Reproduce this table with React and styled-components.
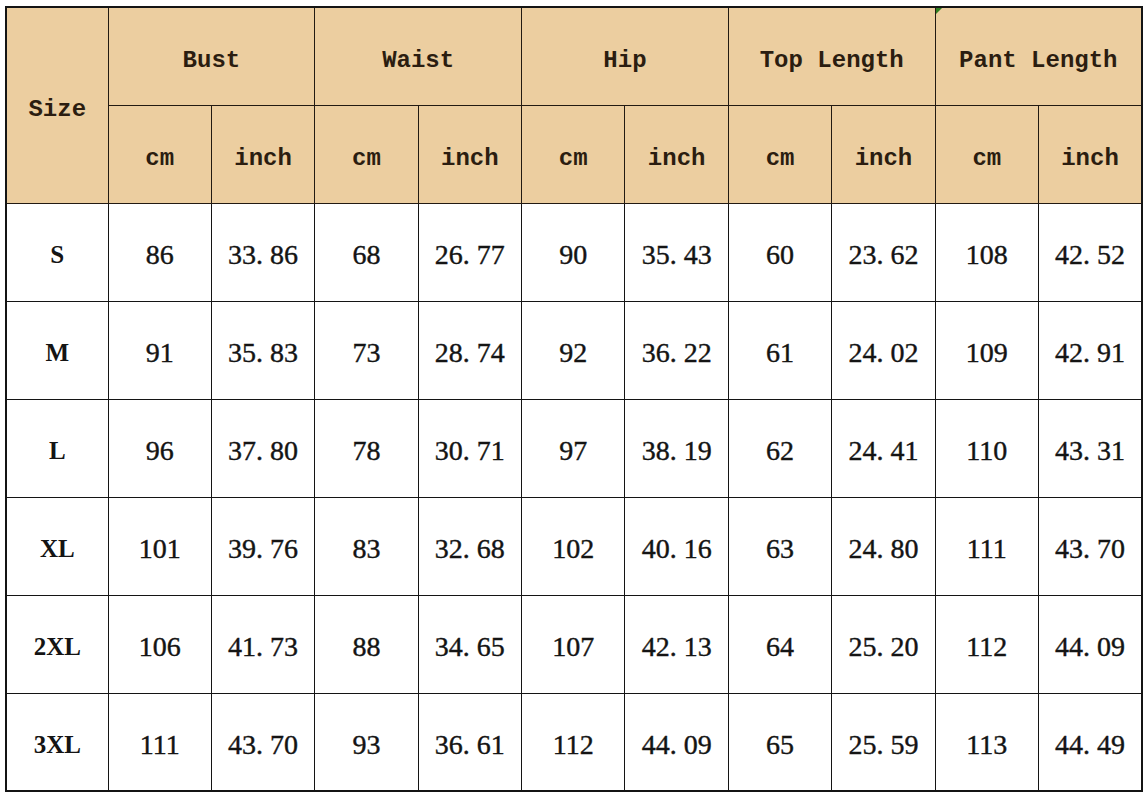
import styled, { createGlobalStyle } from "styled-components";

const GlobalStyle = createGlobalStyle`
  html, body {
    margin: 0;
    padding: 0;
    background: #ffffff;
  }
  body {
    font-family: "Liberation Serif", "Times New Roman", serif;
  }
`;

const Page = styled.div`
  padding: 6px 0 0 5px;
  width: 1148px;
  height: 800px;
  box-sizing: border-box;
`;

const SizeTable = styled.table`
  width: 1138px;
  table-layout: fixed;
  border-collapse: collapse;
  border: 2px solid #141414;
`;

const Row = styled.tr`
  height: 98px;
`;

const HeadCell = styled.th`
  position: relative;
  background: #eccea0;
  border: 1px solid #221a12;
  padding: 9px 0 0;
  text-align: center;
  vertical-align: middle;
  font-family: "Liberation Mono", "DejaVu Sans Mono", monospace;
  font-size: 24px;
  font-weight: 700;
  color: #2b1d10;
  white-space: pre;

  ${({ $marked }) =>
    $marked &&
    `
    &::before {
      content: "";
      position: absolute;
      left: 0;
      top: 0;
      border-top: 6px solid #2e7d1f;
      border-right: 6px solid transparent;
    }
  `}
`;

const DataCell = styled.td`
  border: 1px solid #141414;
  padding: 6px 0 0;
  text-align: center;
  vertical-align: middle;
  font-family: "Liberation Serif", "Times New Roman", serif;
  font-size: ${({ $size }) => ($size ? "25px" : "28px")};
  font-weight: ${({ $size }) => ($size ? 700 : 400)};
  -webkit-text-stroke: ${({ $size }) => ($size ? "0" : "0.4px")};
  color: #141414;
  white-space: pre;
`;

const groups = ["Bust", "Waist", "Hip", "Top Length", "Pant Length"];

const rows = [
  ["S", "86", "33. 86", "68", "26. 77", "90", "35. 43", "60", "23. 62", "108", "42. 52"],
  ["M", "91", "35. 83", "73", "28. 74", "92", "36. 22", "61", "24. 02", "109", "42. 91"],
  ["L", "96", "37. 80", "78", "30. 71", "97", "38. 19", "62", "24. 41", "110", "43. 31"],
  ["XL", "101", "39. 76", "83", "32. 68", "102", "40. 16", "63", "24. 80", "111", "43. 70"],
  ["2XL", "106", "41. 73", "88", "34. 65", "107", "42. 13", "64", "25. 20", "112", "44. 09"],
  ["3XL", "111", "43. 70", "93", "36. 61", "112", "44. 09", "65", "25. 59", "113", "44. 49"],
];

export default function App() {
  return (
    <>
      <GlobalStyle />
      <Page>
        <SizeTable>
          <colgroup>
            <col style={{ width: "102px" }} />
            {Array.from({ length: 10 }).map((_, i) => (
              <col key={i} />
            ))}
          </colgroup>
          <thead>
            <Row>
              <HeadCell rowSpan={2}>Size</HeadCell>
              {groups.map((g, i) => (
                <HeadCell key={g} colSpan={2} $marked={i === groups.length - 1}>
                  {g}
                </HeadCell>
              ))}
            </Row>
            <Row>
              {groups.map((g) => [
                <HeadCell key={g + "cm"}>cm</HeadCell>,
                <HeadCell key={g + "in"}>inch</HeadCell>,
              ])}
            </Row>
          </thead>
          <tbody>
            {rows.map((r) => (
              <Row key={r[0]}>
                {r.map((v, i) => (
                  <DataCell key={i} $size={i === 0}>
                    {v}
                  </DataCell>
                ))}
              </Row>
            ))}
          </tbody>
        </SizeTable>
      </Page>
    </>
  );
}
